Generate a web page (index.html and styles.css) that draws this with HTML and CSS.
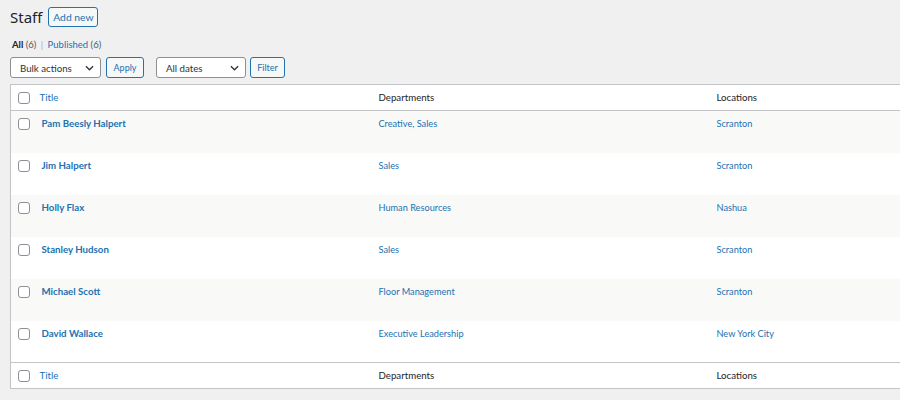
FILE: index.html
```html
<!DOCTYPE html>
<html>
<head>
<meta charset="utf-8">
<link rel="stylesheet" href="styles.css">
</head>
<body>
<div class="wrap">
  <div class="heading">
    <h1 class="title">Staff</h1>
    <a class="btn add-new">Add new</a>
  </div>
  <div class="views">
    <span class="current">All</span> <span class="count">(6)</span> <span class="sep">|</span> <a class="link">Published</a> <span class="count">(6)</span>
  </div>
  <div class="tablenav">
    <div class="select bulk"><span>Bulk actions</span><svg class="chev" viewBox="0 0 10 6" width="9" height="6"><path d="M1 1l4 4 4-4" fill="none" stroke="#2c3338" stroke-width="1.4"/></svg></div>
    <a class="btn apply">Apply</a>
    <div class="select dates"><span>All dates</span><svg class="chev" viewBox="0 0 10 6" width="9" height="6"><path d="M1 1l4 4 4-4" fill="none" stroke="#2c3338" stroke-width="1.4"/></svg></div>
    <a class="btn filter">Filter</a>
  </div>
  <table class="list">
    <colgroup><col class="c-cb"><col class="c-title"><col class="c-dep"><col class="c-loc"></colgroup>
    <thead>
      <tr><td class="cb"><span class="box"></span></td><th class="sortable">Title</th><th>Departments</th><th>Locations</th></tr>
    </thead>
    <tbody>
      <tr class="alt"><td class="cb"><span class="box"></span></td><td><a class="name">Pam Beesly Halpert</a></td><td><a class="link">Creative, Sales</a></td><td><a class="link">Scranton</a></td></tr>
      <tr><td class="cb"><span class="box"></span></td><td><a class="name">Jim Halpert</a></td><td><a class="link">Sales</a></td><td><a class="link">Scranton</a></td></tr>
      <tr class="alt"><td class="cb"><span class="box"></span></td><td><a class="name">Holly Flax</a></td><td><a class="link">Human Resources</a></td><td><a class="link">Nashua</a></td></tr>
      <tr><td class="cb"><span class="box"></span></td><td><a class="name">Stanley Hudson</a></td><td><a class="link">Sales</a></td><td><a class="link">Scranton</a></td></tr>
      <tr class="alt"><td class="cb"><span class="box"></span></td><td><a class="name">Michael Scott</a></td><td><a class="link">Floor Management</a></td><td><a class="link">Scranton</a></td></tr>
      <tr><td class="cb"><span class="box"></span></td><td><a class="name">David Wallace</a></td><td><a class="link">Executive Leadership</a></td><td><a class="link">New York City</a></td></tr>
    </tbody>
    <tfoot>
      <tr><td class="cb"><span class="box"></span></td><th class="sortable">Title</th><th>Departments</th><th>Locations</th></tr>
    </tfoot>
  </table>
</div>
</body>
</html>
```
FILE: styles.css
```css
html, body {
  margin: 0;
  padding: 0;
  overflow: hidden;
  background: #f0f0f1;
  font-family: "Lato", "Noto Sans", sans-serif;
  font-size: 10px;
  color: #2c3338;
}
.wrap {
  padding: 7px 0 0 10px;
  width: 1100px;
}
.heading {
  display: flex;
  align-items: center;
  gap: 6px;
  height: 20px;
}
.title {
  margin: 0;
  font-family: "Noto Sans", sans-serif;
  font-size: 15px;
  font-weight: 400;
  color: #1d2327;
  line-height: 20px;
}
.btn {
  display: inline-flex;
  align-items: center;
  justify-content: center;
  box-sizing: border-box;
  border: 1px solid #2271b1;
  border-radius: 3px;
  background: #f6f7f7;
  color: #2271b1;
  font-size: 9px;
}
.add-new {
  height: 20px;
  width: 50px;
  font-size: 10.3px;
}
.views {
  margin-top: 11px;
  padding-left: 2px;
  height: 14px;
  line-height: 14px;
  font-size: 9.5px;
  color: #50575e;
}
.views .current { color: #1d2327; font-weight: 700; }
.views .sep { color: #a7aaad; margin: 0 2px; }
.link { color: #2271b1; }
.tablenav {
  display: flex;
  align-items: center;
  margin-top: 5px;
  height: 21px;
}
.select {
  display: flex;
  align-items: center;
  justify-content: space-between;
  box-sizing: border-box;
  height: 21px;
  border: 1px solid #8c8f94;
  border-radius: 3px;
  background: #fff;
  padding: 0 6px 0 9px;
  font-size: 9.7px;
  color: #2c3338;
}
.bulk { width: 91px; }
.apply { width: 38px; height: 21px; margin-left: 5px; }
.dates { width: 90px; margin-left: 12px; }
.filter { width: 35px; height: 21px; margin-left: 4px; }
.list {
  margin-top: 6px;
  border-collapse: collapse;
  table-layout: fixed;
  width: 1040px;
  background: #fff;
  border: 1px solid #c3c4c7;
  box-shadow: 0 1px 1px rgba(0,0,0,.04);
}
.c-cb { width: 22px; }
.c-title { width: 338px; }
.c-dep { width: 338px; }
.c-loc { width: 342px; }
.list th, .list td {
  text-align: left;
  font-weight: 400;
  padding: 0 8px;
  vertical-align: top;
}
.list thead tr, .list tfoot tr { height: 25px; }
.list thead th, .list tfoot th {
  line-height: 25px;
  color: #1d2327;
  font-size: 9.7px;
}
.list thead tr { border-bottom: 1px solid #c3c4c7; }
.list tfoot tr { border-top: 1px solid #c3c4c7; }
.list th.sortable { color: #2271b1; padding-left: 7px; }
.list td.cb { padding: 0 0 0 7px; }
.box {
  display: block;
  box-sizing: border-box;
  width: 12px;
  height: 12px;
  border: 1px solid #8c8f94;
  border-radius: 3px;
  background: #fff;
}
.list thead .box, .list tfoot .box { margin-top: 7px; }
.list tbody tr { height: 42px; }
.list tbody tr.alt { background: #f9f9f8; }
.list tbody td {
  padding-top: 6px;
  line-height: 13px;
  font-size: 9.2px;
}
.list tbody .box { margin-top: 7px; }
.name {
  color: #2271b1;
  font-weight: 700;
  font-size: 9.7px;
  padding-left: 1px;
}
```
